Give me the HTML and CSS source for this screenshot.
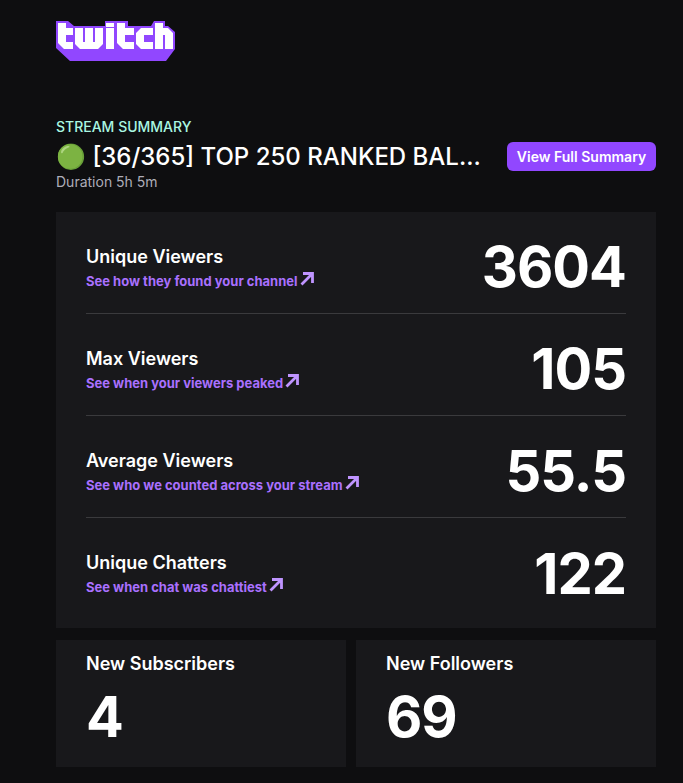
FILE: index.html
```html
<!DOCTYPE html>
<html lang="en">
<head>
<meta charset="utf-8">
<title>Stream Summary</title>
<link rel="stylesheet" href="styles.css">
</head>
<body>
<main class="page">
  <svg class="logo" width="120" height="40" viewBox="0 0 120 40" aria-label="Twitch">
    <path fill="#9147ff" d="M0 0 H12 L18 5 H49 V0 H72 V5 H95 L98 0 H109 V5 H112 L119 11 V28 L110 40 H14 L0 27 Z"/>
    <path fill="#fff" d="M2 2 H10 V7 H17 V14 H10 V21 H17 V28 H8 L2 22 Z"/>
    <path fill="#fff" d="M19 7 H27 V21 H29 V7 H37 V21 H39 V7 H47 V23 L42 28 H24 L19 23 Z"/>
    <path fill="#fff" d="M50 2 H58 V6 H50 Z M50 7 H58 V28 H50 Z"/>
    <path fill="#fff" d="M61 2 H69 V7 H78 V14 H69 V21 H78 V28 H67 L61 22 Z"/>
    <path fill="#fff" d="M85 7 H97 V14 H88 V21 H97 V28 H85 L80 23 V12 Z"/>
    <path fill="#fff" d="M99 2 H107 V7 H112 L117 12 V28 H109 V14 H107 V28 H99 Z"/>
  </svg>

  <header class="head">
    <div class="head-text">
      <div class="eyebrow">STREAM SUMMARY</div>
      <h1 class="title"><span class="emoji">🟢</span> [36/365] TOP 250 RANKED BAL...</h1>
      <div class="duration">Duration 5h 5m</div>
    </div>
    <a class="button">View Full Summary</a>
  </header>

  <section class="card stats">
    <div class="row">
      <div class="row-text">
        <div class="label">Unique Viewers</div>
        <a class="link">See how they found your channel<svg class="arrow" width="16" height="16" viewBox="0 0 16 16"><path d="M4 3.5H13.5V13M13 4L2.5 14.5" fill="none" stroke="#bf94ff" stroke-width="2.8"/></svg></a>
      </div>
      <div class="value">3604</div>
    </div>
    <div class="row">
      <div class="row-text">
        <div class="label">Max Viewers</div>
        <a class="link">See when your viewers peaked<svg class="arrow" width="16" height="16" viewBox="0 0 16 16"><path d="M4 3.5H13.5V13M13 4L2.5 14.5" fill="none" stroke="#bf94ff" stroke-width="2.8"/></svg></a>
      </div>
      <div class="value">105</div>
    </div>
    <div class="row">
      <div class="row-text">
        <div class="label">Average Viewers</div>
        <a class="link">See who we counted across your stream<svg class="arrow" width="16" height="16" viewBox="0 0 16 16"><path d="M4 3.5H13.5V13M13 4L2.5 14.5" fill="none" stroke="#bf94ff" stroke-width="2.8"/></svg></a>
      </div>
      <div class="value">55.5</div>
    </div>
    <div class="row">
      <div class="row-text">
        <div class="label">Unique Chatters</div>
        <a class="link">See when chat was chattiest<svg class="arrow" width="16" height="16" viewBox="0 0 16 16"><path d="M4 3.5H13.5V13M13 4L2.5 14.5" fill="none" stroke="#bf94ff" stroke-width="2.8"/></svg></a>
      </div>
      <div class="value">122</div>
    </div>
  </section>

  <section class="pair">
    <div class="card mini">
      <div class="label">New Subscribers</div>
      <div class="value">4</div>
    </div>
    <div class="card mini">
      <div class="label">New Followers</div>
      <div class="value">69</div>
    </div>
  </section>
</main>
</body>
</html>
```
FILE: styles.css
```css
html, body {
  margin: 0;
  height: 100%;
  overflow: hidden;
  background: #0e0e10;
}
body {
  font-family: Inter, "Noto Sans", sans-serif;
  font-optical-sizing: none;
  color: #fff;
}
.page {
  width: 600px;
  margin-left: 56px;
  padding-top: 21px;
}
.logo {
  display: block;
}
.head {
  display: flex;
  align-items: flex-start;
  justify-content: space-between;
  margin-top: 57px;
}
.eyebrow {
  font-size: 14px;
  line-height: 17px;
  font-weight: 550;
  color: #aaf7e2;
}
.title {
  margin: 7px 0 0;
  font-size: 24px;
  line-height: 30px;
  font-weight: 550;
  color: #fff;
  white-space: nowrap;
}
.duration {
  font-size: 14px;
  line-height: 17px;
  margin-top: 1px;
  color: #adadb8;
}
.button {
  background: #9147ff;
  border-radius: 6px;
  height: 29px;
  width: 149px;
  margin-top: 24px;
  display: flex;
  align-items: center;
  justify-content: center;
  font-size: 14px;
  font-weight: 600;
  color: #fff;
}
.card {
  background: #18181b;
}
.stats {
  margin-top: 22px;
  padding: 0 30px;
  height: 416px;
  box-sizing: border-box;
}
.row {
  height: 102px;
  box-sizing: border-box;
  padding-top: 4px;
  display: flex;
  align-items: center;
  justify-content: space-between;
  border-bottom: 1px solid #3a3a3d;
}
.row:last-child {
  border-bottom: 0;
}
.row-text {
  padding-top: 5px;
}
.row .value {
  padding-top: 5px;
}
.label {
  font-size: 18px;
  line-height: 22px;
  font-weight: 600;
  color: #fff;
}
.link {
  display: flex;
  align-items: center;
  font-size: 13px;
  line-height: 16px;
  font-weight: 700;
  color: #a970ff;
  margin-top: 5px;
}
.arrow {
  margin-left: 1px;
  margin-top: -6px;
}
.value {
  font-size: 56px;
  line-height: 60px;
  font-weight: 750;
  letter-spacing: -1px;
  color: #fff;
}
.pair {
  display: flex;
  gap: 10px;
  margin-top: 12px;
}
.mini {
  height: 127px;
  box-sizing: border-box;
  padding: 13px 30px 0;
}
.mini:first-child {
  width: 290px;
}
.mini:last-child {
  width: 300px;
}
.mini .value {
  margin-top: 12px;
}
```
